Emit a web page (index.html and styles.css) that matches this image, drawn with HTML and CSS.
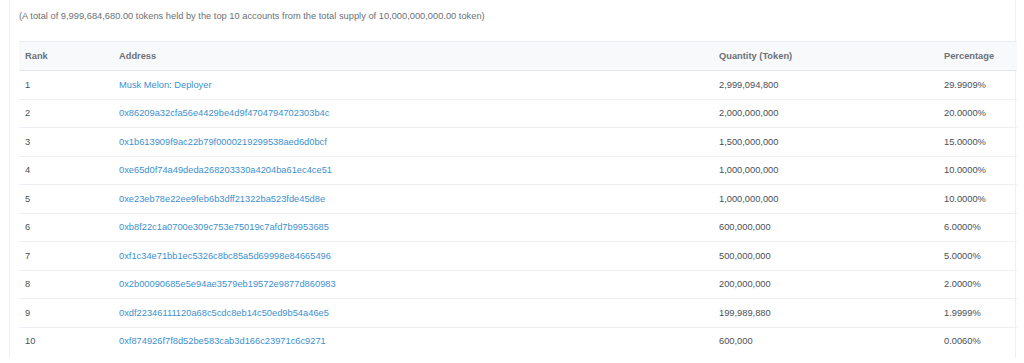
FILE: index.html
```html
<!DOCTYPE html>
<html>
<head>
<meta charset="utf-8">
<link rel="stylesheet" href="styles.css">
</head>
<body>
<div class="panel">
  <p class="summary">(A total of 9,999,684,680.00 tokens held by the top 10 accounts from the total supply of 10,000,000,000.00 token)</p>
  <table class="holders">
    <thead>
      <tr><th class="c-rank">Rank</th><th class="c-addr">Address</th><th class="c-qty">Quantity (Token)</th><th class="c-pct">Percentage</th></tr>
    </thead>
    <tbody>
      <tr><td>1</td><td><a href="#">Musk Melon: Deployer</a></td><td>2,999,094,800</td><td>29.9909%</td></tr>
      <tr><td>2</td><td><a href="#">0x86209a32cfa56e4429be4d9f4704794702303b4c</a></td><td>2,000,000,000</td><td>20.0000%</td></tr>
      <tr><td>3</td><td><a href="#">0x1b613909f9ac22b79f0000219299538aed6d0bcf</a></td><td>1,500,000,000</td><td>15.0000%</td></tr>
      <tr><td>4</td><td><a href="#">0xe65d0f74a49deda268203330a4204ba61ec4ce51</a></td><td>1,000,000,000</td><td>10.0000%</td></tr>
      <tr><td>5</td><td><a href="#">0xe23eb78e22ee9feb6b3dff21322ba523fde45d8e</a></td><td>1,000,000,000</td><td>10.0000%</td></tr>
      <tr><td>6</td><td><a href="#">0xb8f22c1a0700e309c753e75019c7afd7b9953685</a></td><td>600,000,000</td><td>6.0000%</td></tr>
      <tr><td>7</td><td><a href="#">0xf1c34e71bb1ec5326c8bc85a5d69998e84665496</a></td><td>500,000,000</td><td>5.0000%</td></tr>
      <tr><td>8</td><td><a href="#">0x2b00090685e5e94ae3579eb19572e9877d860983</a></td><td>200,000,000</td><td>2.0000%</td></tr>
      <tr><td>9</td><td><a href="#">0xdf22346111120a68c5cdc8eb14c50ed9b54a46e5</a></td><td>199,989,880</td><td>1.9999%</td></tr>
      <tr><td>10</td><td><a href="#">0xf874926f7f8d52be583cab3d166c23971c6c9271</a></td><td>600,000</td><td>0.0060%</td></tr>
    </tbody>
  </table>
</div>
</body>
</html>
```
FILE: styles.css
```css
html, body {
  margin: 0;
  padding: 0;
  background: #ffffff;
}
body {
  font-family: "Liberation Sans", Arial, sans-serif;
  font-size: 9.3px;
  color: #4a4f55;
}
.panel {
  margin-left: 9px;
  width: 1007px;
  height: 358px;
  box-sizing: border-box;
  border-left: 1px solid #eef0f3;
  border-right: 1px solid #eef0f3;
  padding-left: 9px;
  padding-top: 10px;
}
.summary {
  margin: 0 0 19px 0;
  line-height: 12px;
  color: #6b7177;
}
.holders {
  width: 998px;
  border-collapse: collapse;
  table-layout: fixed;
}
.holders th {
  text-align: left;
  font-weight: bold;
  color: #6b7177;
  background: #f8f9fb;
  height: 28px;
  padding: 0 0 0 6px;
  border-top: 1px solid #e9ecf2;
  border-bottom: 1px solid #e2e6ee;
}
.holders td {
  height: 27.5px;
  padding: 0 0 0 6px;
  border-bottom: 1px solid #eceff4;
  color: #4a4f55;
}
.holders tbody tr:last-child td {
  border-bottom: none;
}
.c-rank { width: 88px; }
.c-addr { width: 594px; }
.c-qty { width: 219px; }
.c-pct { width: auto; }
.holders a {
  color: #3d8fd0;
  text-decoration: none;
}
```
